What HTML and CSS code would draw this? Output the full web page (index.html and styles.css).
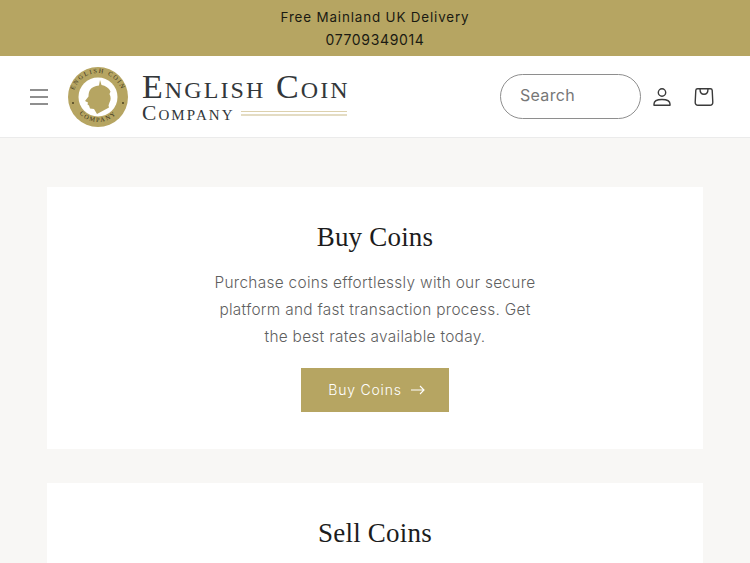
FILE: index.html
```html
<!DOCTYPE html>
<html lang="en">
<head>
<meta charset="utf-8">
<title>English Coin Company</title>
<link rel="stylesheet" href="styles.css">
</head>
<body>
<div class="announce">
  <p>Free Mainland UK Delivery</p>
  <p class="phone">07709349014</p>
</div>
<header class="header">
  <button class="icon-btn menu" aria-label="Menu">
    <svg width="18" height="16" viewBox="0 0 18 16"><path d="M0 1h18M0 8h18M0 15h18" stroke="#6b6b6b" stroke-width="1.5" fill="none"/></svg>
  </button>
  <a class="logo" href="#">
    <svg class="coin" width="60" height="60" viewBox="0 0 60 60">
      <defs>
        <path id="arcTop" d="M5.500 36a25 25 0 1 1 49 0"/>
        <path id="arcBottom" d="M6 38a25.500 25.500 0 0 0 48 0"/>
      </defs>
      <circle cx="30" cy="30" r="30" fill="#b6a562"/>
      <circle cx="30" cy="30" r="19.5" fill="#fff"/>
      <path d="M32 13l1.500 5c4 .5 7.500 3 9 6.500l-1 2.500c1.500 3 1.500 6 0 8.500l-1 3 .5 2L29 47l-3-5-4-.5-1-3-1.500-1 .5-2-3-1.500 3.500-4.500c0-3 .5-5 1.500-6.500 1.500-2.500 5-4 9-4.500z" fill="#b6a562"/>
      <text class="coin-text"><textPath href="#arcTop" startOffset="50%" text-anchor="middle">ENGLISH COIN</textPath></text>
      <text class="coin-text"><textPath href="#arcBottom" startOffset="50%" text-anchor="middle">COMPANY</textPath></text>
      <circle cx="5" cy="36" r="1" fill="#4a4020"/>
      <circle cx="55" cy="36" r="1" fill="#4a4020"/>
    </svg>
    <span class="wordmark">
      <span class="word-top">English Coin</span>
      <span class="word-bottom"><span class="company">Company</span><span class="rule"></span></span>
    </span>
  </a>
  <div class="actions">
    <div class="search">Search</div>
    <button class="icon-btn" aria-label="Account">
      <svg width="20" height="20" viewBox="0 0 20 20" fill="none" stroke="#3a3a3a" stroke-width="1.4"><circle cx="10" cy="5.500" r="3.700"/><path d="M2 18.300h16v-1.200c0-2.800-2.800-4.600-8-4.600s-8 1.800-8 4.600z" stroke-linejoin="round"/></svg>
    </button>
    <button class="icon-btn" aria-label="Cart">
      <svg width="20" height="20" viewBox="0 0 20 20" fill="none" stroke="#3a3a3a" stroke-width="1.4"><path d="M3.500 1.700h13c.9 0 1.600.7 1.700 1.600l.6 12c.1 1.700-1.200 3-2.800 3H4c-1.600 0-2.900-1.300-2.800-3l.6-12c.1-.9.8-1.600 1.700-1.600z"/><path d="M6 1.700c0 3.500 1.500 5.600 4 5.600s4-2.100 4-5.600"/></svg>
    </button>
  </div>
</header>
<main class="main">
  <section class="card">
    <h2>Buy Coins</h2>
    <p>Purchase coins effortlessly with our secure platform and fast transaction process. Get the best rates available today.</p>
    <a class="btn" href="#">Buy Coins
      <svg width="14" height="10" viewBox="0 0 14 10" fill="none" stroke="#fff" stroke-width="1.100"><path d="M0 5h13M9 1l4 4-4 4"/></svg>
    </a>
  </section>
  <section class="card">
    <h2>Sell Coins</h2>
  </section>
</main>
</body>
</html>
```
FILE: styles.css
```css
* { box-sizing: border-box; }
html, body { margin: 0; height: 563px; overflow: hidden; }
body { background: #f8f7f5; font-family: "Inter", "Liberation Sans", sans-serif; color: #121212; }
p { margin: 0; }

.announce { height: 56px; background: #b6a562; padding-top: 6px; text-align: center; line-height: 23px; letter-spacing: 0.85px; color: #1a1a12; }
.announce p { font-size: 13.400px; }
.announce .phone { font-size: 14px; line-height: 22px; letter-spacing: 0.650px; }

.header { height: 82px; background: #fff; border-bottom: 1px solid #ebebeb; display: flex; align-items: center; padding: 0 36px 0 30px; }
.icon-btn { border: 0; background: none; padding: 0; display: flex; cursor: pointer; }
.menu { margin-right: 20px; }
.logo { display: flex; align-items: center; text-decoration: none; gap: 14px; color: #33373a; }
.coin-text { font-family: "Liberation Serif", serif; font-size: 6.400px; letter-spacing: 1.500px; fill: #3a3320; }
.wordmark { display: flex; flex-direction: column; font-family: "Liberation Serif", serif; }
.word-top { font-variant: small-caps; font-size: 34px; line-height: 31px; letter-spacing: 2.100px; white-space: nowrap; }
.word-bottom { display: flex; align-items: center; gap: 6px; margin-top: 1px; }
.company { font-variant: small-caps; font-size: 21.500px; line-height: 20px; letter-spacing: 2.100px; }
.rule { width: 106px; height: 5px; border-top: 1px solid #ddd1ad; border-bottom: 2px solid #e4dcc3; margin-top: 2px; }

.actions { margin-left: auto; display: flex; align-items: center; gap: 22px; }
.search { width: 141px; height: 45px; margin-right: -11px; border: 1px solid #8e8e8e; border-radius: 23px; padding-left: 19px; font-size: 16px; line-height: 41px; letter-spacing: 0.300px; color: #777; background: #fff; }

.main { padding: 49px 47px 0; display: flex; flex-direction: column; gap: 34px; }
.card { background: #fff; height: 262px; padding-top: 33px; text-align: center; display: flex; flex-direction: column; align-items: center; flex: none; }
.card h2 { margin: 0; font-family: "Liberation Serif", serif; font-weight: 400; font-size: 27px; line-height: 35px; letter-spacing: 0.200px; color: #1c1c1c; }
.card p { width: 330px; margin-top: 14px; font-size: 15.400px; font-weight: 300; line-height: 27.200px; letter-spacing: 0.300px; color: #5f5f5f; }
.btn { margin-top: 17px; width: 148px; height: 44px; padding-left: 3px; background: #b6a562; color: #fff; text-decoration: none; display: flex; align-items: center; justify-content: center; gap: 9px; font-size: 14px; font-weight: 300; letter-spacing: 0.800px; }
```
